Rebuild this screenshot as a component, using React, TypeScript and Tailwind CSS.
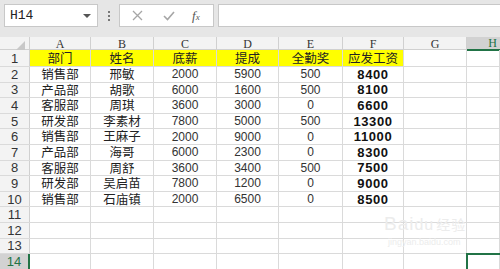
import React from 'react'

const cols = ['A', 'B', 'C', 'D', 'E', 'F', 'G', 'H']

const data: string[][] = [
  ['部门', '姓名', '底薪', '提成', '全勤奖', '应发工资'],
  ['销售部', '邢敏', '2000', '5900', '500', '8400'],
  ['产品部', '胡歌', '6000', '1600', '500', '8100'],
  ['客服部', '周琪', '3600', '3000', '0', '6600'],
  ['研发部', '李素材', '7800', '5000', '500', '13300'],
  ['销售部', '王麻子', '2000', '9000', '0', '11000'],
  ['产品部', '海哥', '6000', '2300', '0', '8300'],
  ['客服部', '周舒', '3600', '3400', '500', '7500'],
  ['研发部', '吴启苗', '7800', '1200', '0', '9000'],
  ['销售部', '石庙镇', '2000', '6500', '0', '8500'],
]

const grid = 'grid grid-cols-[30px_61px_63px_63px_62px_64px_61px_63px_1fr]'
const cjk = "font-['Noto_Sans_CJK_SC',sans-serif]"

const App: React.FC = () => {
  const rows = Array.from({ length: 14 }, (_, i) => i)

  return (
    <div className="w-[500px] h-[269px] overflow-hidden bg-white relative select-none">
      {/* formula bar */}
      <div className="h-[37px] bg-[#e6e6e6] flex items-start pt-[4px] pl-[4px]">
        <div className="w-[94px] h-[23px] bg-white border border-[#c8c8c8] flex items-center pl-[5px] relative">
          <span className="font-['Liberation_Mono',monospace] text-[13px] text-[#222]">H14</span>
          <span className="absolute left-[78px] top-[9px] w-0 h-0 border-l-[4px] border-r-[4px] border-t-[4px] border-l-transparent border-r-transparent border-t-[#555]" />
        </div>
        <div className="w-[21px] h-[23px] flex flex-col items-center justify-center gap-[2px]">
          <span className="w-[2px] h-[2px] bg-[#777]" />
          <span className="w-[2px] h-[2px] bg-[#777]" />
          <span className="w-[2px] h-[2px] bg-[#777]" />
        </div>
        <div className="w-[95px] h-[23px] bg-white border border-[#c8c8c8] flex items-center">
          <svg className="ml-[12px]" width="11" height="11" viewBox="0 0 11 11">
            <path d="M1 1L10 10M10 1L1 10" stroke="#a6a6a6" strokeWidth="1.3" />
          </svg>
          <svg className="ml-[20px]" width="12" height="10" viewBox="0 0 12 10">
            <path d="M1 5L4.5 8.5L11 1" stroke="#a6a6a6" strokeWidth="1.6" fill="none" />
          </svg>
          <span className="ml-[17px] font-['Liberation_Serif',serif] italic text-[13px] text-[#555] leading-none">
            f<span className="text-[9px]">x</span>
          </span>
        </div>
        <div className="ml-[4px] flex-1 h-[23px] bg-white border border-[#c8c8c8] border-r-0" />
      </div>

      {/* column headers */}
      <div className={`${grid} h-[13px] bg-[#f3f3f3] border-b border-[#d0d0d0]`}>
        <div className="flex items-end justify-end pr-[4px] pb-[1px] border-r border-[#d0d0d0]">
          <svg width="9" height="9" viewBox="0 0 9 9">
            <path d="M9 0L9 9L0 9Z" fill="#c8c8c8" />
          </svg>
        </div>
        {cols.map(c => (
          <div
            key={c}
            className={`flex items-center justify-center font-['Liberation_Serif',serif] text-[12px] leading-none ${
              c === 'H'
                ? 'bg-[#d2d2d2] border-b-2 border-[#217346] text-[#217346] pl-[18px]'
                : 'border-r border-[#d0d0d0] text-[#333]'
            }`}
          >
            {c}
          </div>
        ))}
      </div>

      {/* rows */}
      {rows.map(r => {
        const row = data[r]
        const sel = r === 13
        return (
          <div
            key={r}
            className={`${grid} ${r === 0 ? 'h-[17px]' : 'h-[15.6px]'} border-b border-[#dadada]`}
          >
            <div
              className={`flex items-center justify-center font-['Liberation_Sans',sans-serif] text-[13px] leading-none ${
                sel
                  ? 'bg-[#d2d2d2] border-r-2 border-[#217346] text-[#217346]'
                  : 'bg-[#f3f3f3] border-r border-[#d0d0d0] text-[#333]'
              }`}
            >
              {r + 1}
            </div>
            {cols.map((c, ci) => {
              const v = row ? row[ci] : undefined
              const isNum = v !== undefined && /^\d+$/.test(v)
              const yellow = r === 0 && ci < 6
              const bold = ci === 5 && r > 0
              return (
                <div
                  key={c}
                  className={`relative flex items-center justify-center leading-none border-r border-[#dadada] ${
                    yellow ? 'bg-[#ffff00]' : ''
                  } ${
                    isNum
                      ? bold
                        ? "font-['Liberation_Sans',sans-serif] text-[13px] font-bold tracking-[0.6px] text-[#111]"
                        : "font-['Liberation_Sans',sans-serif] text-[12px] text-[#333]"
                      : `${cjk} text-[12.5px] text-[#222]`
                  }`}
                >
                  {v}
                  {sel && c === 'H' && (
                    <span className="absolute left-[-1px] top-[-1px] w-[40px] h-[20px] border-2 border-[#217346]" />
                  )}
                </div>
              )
            })}
          </div>
        )
      })}

      {/* watermark */}
      <div className="absolute left-[384px] top-[214px] pointer-events-none text-[#ececec] leading-none">
        <div className="font-['Liberation_Sans',sans-serif] text-[19px] tracking-[1px]">
          Bai<span className="text-[16px]">du</span>
          <span className={`${cjk} text-[14px] ml-[2px]`}>经验</span>
        </div>
        <div className="font-['Liberation_Sans',sans-serif] text-[9px] mt-[5px] ml-[4px]">jingyan.baidu.com</div>
      </div>
    </div>
  )
}

export default App
